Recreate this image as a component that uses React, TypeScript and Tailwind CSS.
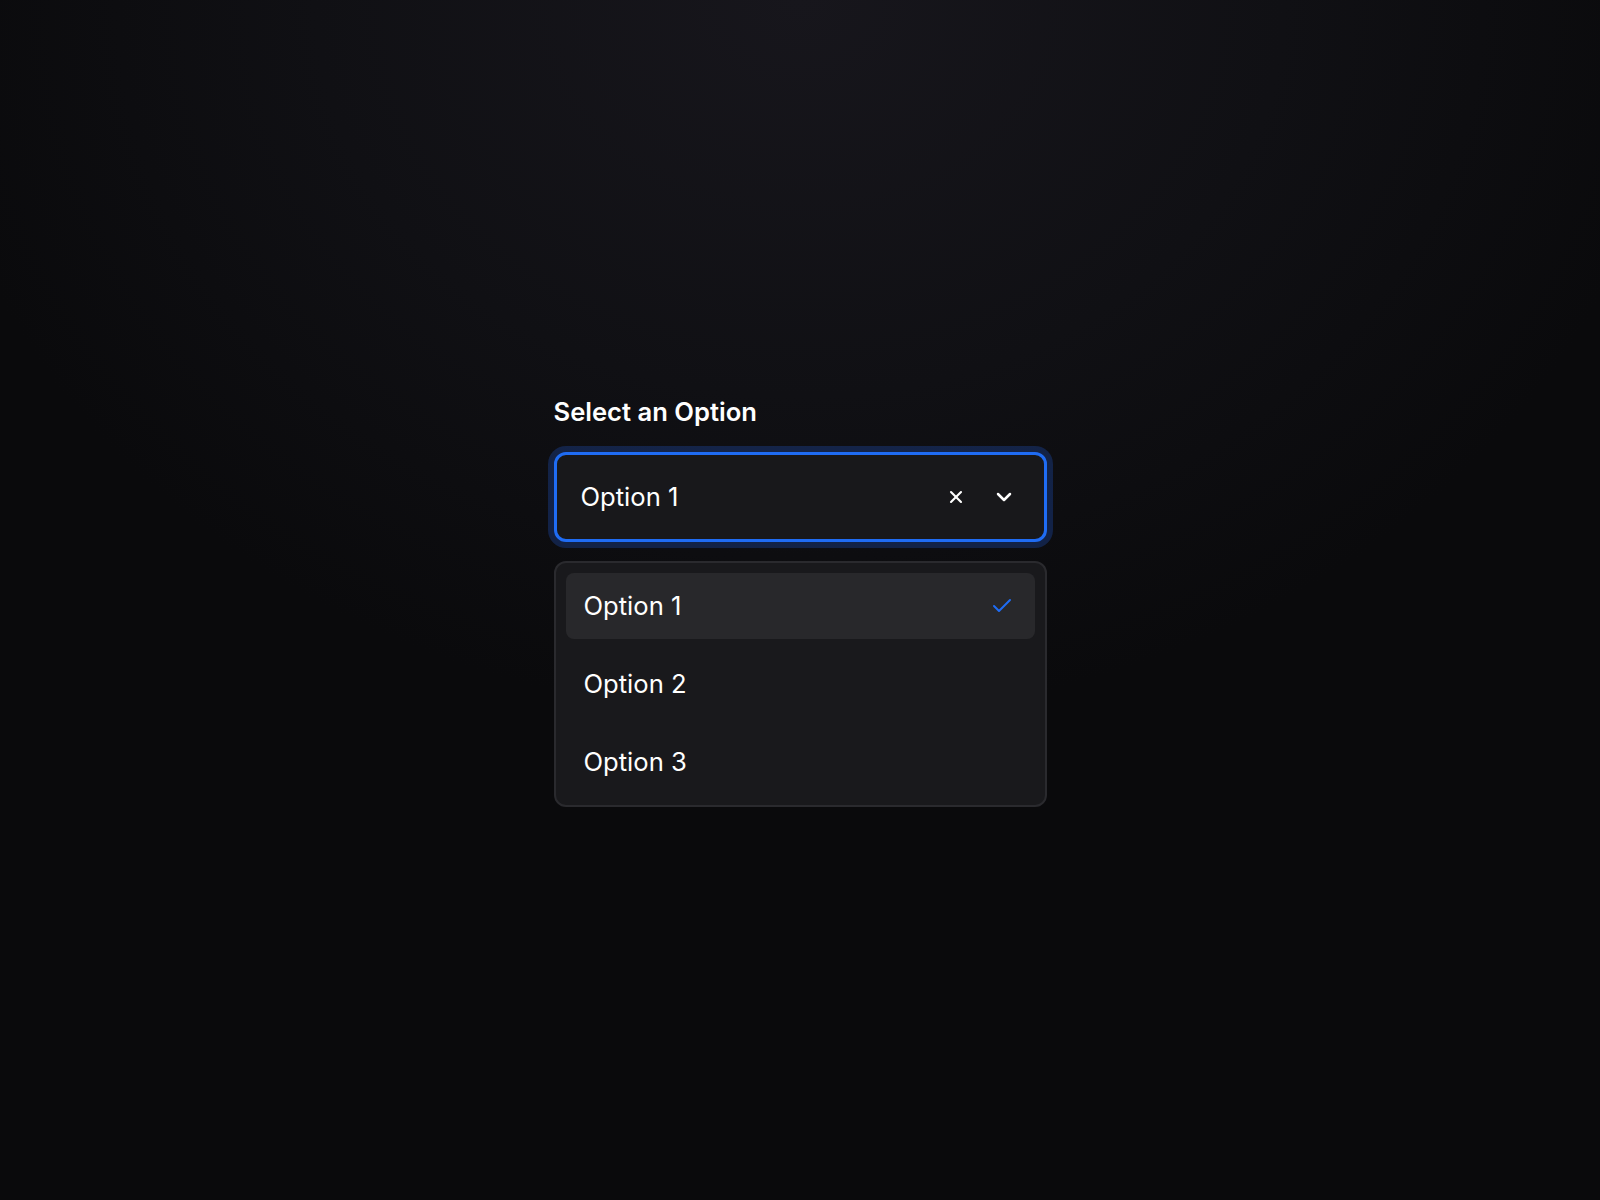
import { useState } from 'react';
import { Check, ChevronDown, X } from 'lucide-react';

const options = ['Option 1', 'Option 2', 'Option 3'];

export default function App() {
  const [selected, setSelected] = useState<string | null>('Option 1');
  const [open, setOpen] = useState(true);

  return (
    <div
      className="min-h-screen w-full flex items-center justify-center bg-[#0a0a0c] bg-[radial-gradient(ellipse_55%_60%_at_50%_0%,#17161c_0%,#101014_55%,#0a0a0c_100%)] text-white"
      style={{ fontFamily: 'Inter, "Noto Sans", sans-serif' }}
    >
      <div className="w-[493px] flex flex-col pt-[3px]">
        <label className="text-[25.6px] leading-[32px] font-semibold text-white mb-[24.6px]">Select an Option</label>

        <div
          className="h-[90px] flex items-center rounded-[12px] border-[3px] border-[#1f6cf4] bg-[#18181b] ring-[6px] ring-[#2563eb]/25 pl-6 pr-[20px] cursor-pointer"
          onClick={() => setOpen(!open)}
        >
          <span className="flex-1 text-[25.6px] leading-[32px] text-white">{selected ?? 'Select...'}</span>
          {selected && (
            <button
              className="w-10 h-10 flex items-center justify-center text-white"
              onClick={(e) => {
                e.stopPropagation();
                setSelected(null);
              }}
            >
              <X size={20} strokeWidth={2.5} />
            </button>
          )}
          <span className="w-10 h-10 ml-2 flex items-center justify-center text-white">
            <ChevronDown size={24} strokeWidth={2.5} />
          </span>
        </div>

        {open && (
          <div className="mt-[19px] rounded-[12px] border-2 border-[#2a2a2e] bg-[#19191c] p-[10px] flex flex-col gap-3">
            {options.map((opt) => (
              <button
                key={opt}
                onClick={() => setSelected(opt)}
                className={
                  'h-[66px] w-full flex items-center justify-between rounded-[8px] pl-[18px] pr-[21px] text-left text-[25.6px] leading-[32px] text-white ' +
                  (selected === opt ? 'bg-[#28282b]' : 'bg-transparent hover:bg-[#222225]')
                }
              >
                <span>{opt}</span>
                {selected === opt && <Check size={24} strokeWidth={2} className="text-[#1f6cf4]" />}
              </button>
            ))}
          </div>
        )}
      </div>
    </div>
  );
}
